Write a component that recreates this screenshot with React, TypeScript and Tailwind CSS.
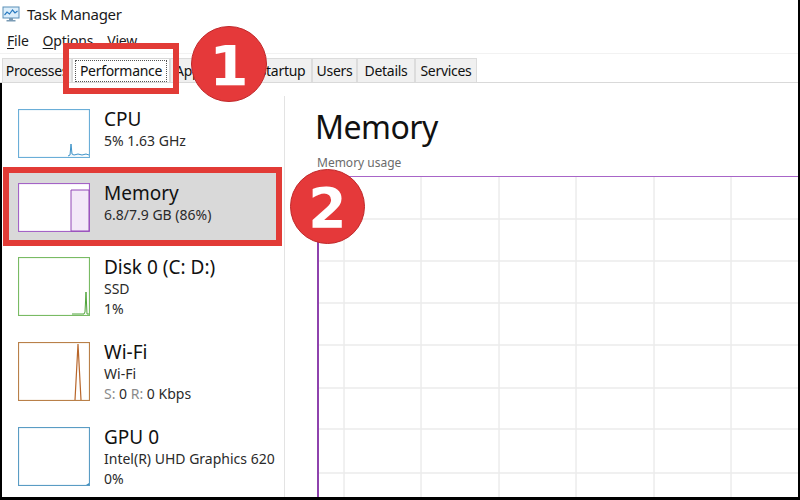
import React from "react";

const tabs: { label: string; w: string; active?: boolean }[] = [
  { label: "Processes", w: "w-[70px]" },
  { label: "Performance", w: "w-[98px]", active: true },
  { label: "App history", w: "w-[82px]" },
  { label: "Startup", w: "w-[60px]" },
  { label: "Users", w: "w-[45px]" },
  { label: "Details", w: "w-[58px]" },
  { label: "Services", w: "w-[62px]" },
];

function TaskIcon() {
  return (
    <svg width="18" height="17" viewBox="0 0 18 17">
      <rect x="1" y="1" width="16" height="11" fill="#dceefb" stroke="#5b8fb8" strokeWidth="1" />
      <path d="M2.5 9 L5 6 L7.5 8 L10.5 4 L13 7 L15.5 5" fill="none" stroke="#2b7bc0" strokeWidth="1.2" />
      <rect x="7" y="12" width="4" height="2" fill="#7a9bb5" />
      <rect x="4.5" y="14" width="9" height="1.5" fill="#7a9bb5" />
    </svg>
  );
}

function Thumb({ kind, h }: { kind: string; h: number }) {
  const w = 72;
  const border: Record<string, string> = {
    cpu: "#6aaed8",
    mem: "#a463c6",
    disk: "#79bb64",
    wifi: "#b98049",
    gpu: "#5a9cc4",
  };
  return (
    <svg width={w} height={h} viewBox={`0 0 ${w} ${h}`} className="shrink-0 block">
      <rect x="0.5" y="0.5" width={w - 1} height={h - 1} fill="#ffffff" stroke={border[kind]} strokeWidth="1.2" />
      {kind === "cpu" && (
        <path
          d={`M50 ${h - 2} L52 ${h - 3} L53 ${h - 14} L54 ${h - 4} L56 ${h - 3} L60 ${h - 4} L64 ${h - 3} L68 ${h - 4} L71 ${h - 3}`}
          fill="#eaf3fa"
          stroke="#3f94c9"
          strokeWidth="1"
        />
      )}
      {kind === "mem" && (
        <path d={`M53 ${h - 1} L53 7 L71 7 L71 ${h - 1} Z`} fill="#f3e8f8" stroke="#9246b6" strokeWidth="1" />
      )}
      {kind === "disk" && (
        <g fill="none" stroke="#4fa43a" strokeWidth="1">
          <path d={`M54 ${h - 2} L66 ${h - 2} L67 ${h - 4} L68 ${h - 24} L69 ${h - 2} L71 ${h - 2}`} />
        </g>
      )}
      {kind === "wifi" && (
        <path d={`M57 ${h - 1} L60 2 L63 ${h - 1}`} fill="none" stroke="#b8662a" strokeWidth="1.2" />
      )}
      {kind === "gpu" && <path d={`M68 ${h - 1} L71 ${h - 3} L71 ${h - 1} Z`} fill="#3f8fc0" />}
    </svg>
  );
}

function Item({
  kind,
  h,
  rowH,
  title,
  lines,
  selected,
}: {
  kind: string;
  h: number;
  rowH: string;
  title: string;
  lines: React.ReactNode[];
  selected?: boolean;
}) {
  return (
    <div className={`${rowH} mx-[5px] flex gap-[14px] pl-[11px] pt-[13px] ${selected ? "bg-[#d9d9d9]" : ""}`}>
      <Thumb kind={kind} h={h} />
      <div className="flex flex-col mt-[-2px]">
        <div className="text-[19px] leading-[24px] text-[#111]">{title}</div>
        {lines.map((l, i) => (
          <div key={i} className="text-[14px] leading-[20px] text-[#2a2a2a]">
            {l}
          </div>
        ))}
      </div>
    </div>
  );
}

export default function App() {
  const vx = [27, 104, 182, 259, 337, 414];
  const hy = [43, 85, 127, 169, 212, 253, 297];
  return (
    <div className="relative w-[800px] h-[500px] overflow-hidden bg-white font-['Noto_Sans',sans-serif] text-[#111] border-r-2 border-b-[3px] border-black">
      {/* title bar */}
      <div className="h-[28px] flex items-center pl-[2px] gap-[7px]">
        <TaskIcon />
        <span className="text-[15px] tracking-[-0.3px] text-[#1a1a1a]">Task Manager</span>
      </div>
      {/* menu */}
      <div className="h-[26px] flex items-center pl-[7px] gap-[14px] text-[14px] tracking-[-0.2px] text-[#1a1a1a] border-b border-[#f2f2f2]">
        <span>
          <span className="underline underline-offset-2">F</span>ile
        </span>
        <span>
          <span className="underline underline-offset-2">O</span>ptions
        </span>
        <span>
          <span className="underline underline-offset-2">V</span>iew
        </span>
      </div>
      {/* tabs */}
      <div className="flex pl-[2px] pt-[4px] border-b border-[#d9d9d9]">
        {tabs.map((t) => (
          <div
            key={t.label}
            className={`${t.w} h-[24px] flex items-center justify-center text-[14px] tracking-[-0.3px] whitespace-nowrap overflow-hidden border border-b-0 ${
              t.active ? "bg-white border-[#d9d9d9]" : "bg-[#f0f0f0] border-[#dcdcdc]"
            }`}
          >
            <span className={t.active ? "border border-dotted border-[#555] px-[4px] leading-[20px]" : ""}>
              {t.label}
            </span>
          </div>
        ))}
      </div>
      {/* main */}
      <div className="flex pt-[13px] h-[416px] border-l-2 border-black">
        <div className="w-[283px] shrink-0 border-r border-[#e3e3e3] flex flex-col">
          <Item kind="cpu" h={49} rowH="h-[74px]" title="CPU" lines={["5%  1.63 GHz"]} />
          <Item kind="mem" h={49} rowH="h-[74px]" title="Memory" lines={["6.8/7.9 GB (86%)"]} selected />
          <Item kind="disk" h={59} rowH="h-[85px]" title="Disk 0 (C: D:)" lines={["SSD", "1%"]} />
          <Item
            kind="wifi"
            h={59}
            rowH="h-[85px]"
            title="Wi-Fi"
            lines={[
              "Wi-Fi",
              <span key="s">
                <span className="text-[#8a8a8a]">S:</span> 0 <span className="text-[#8a8a8a]">R:</span> 0 Kbps
              </span>,
            ]}
          />
          <Item kind="gpu" h={59} rowH="h-[85px]" title="GPU 0" lines={["Intel(R) UHD Graphics 620", "0%"]} />
        </div>
        <div className="flex-1 flex flex-col pl-[30px] pt-[11px]">
          <div className="text-[32px] leading-[40px] tracking-[-0.5px] text-[#111]">Memory</div>
          <div className="mt-[8px] pl-[2px] text-[12px] leading-[16px] text-[#6b6b6b]">Memory usage</div>
          <div className="mt-[5px] ml-[2px] flex-1 border-t border-l-2 border-t-[#a865c8] border-l-[#8e42ad]">
            <svg width="500" height="340" className="block">
              {vx.map((x) => (
                <line key={x} x1={x - 2} y1={0} x2={x - 2} y2={340} stroke="#e2e2e2" strokeWidth="1" />
              ))}
              {hy.map((y) => (
                <line key={y} x1={0} y1={y - 1} x2={500} y2={y - 1} stroke="#ebebeb" strokeWidth="1.3" />
              ))}
            </svg>
          </div>
        </div>
      </div>

      {/* annotations */}
      <div className="absolute left-[63px] top-[43px] w-[116px] h-[51px] border-[6px] border-[#e23b36]" />
      <div className="absolute left-[191px] top-[26px] w-[76px] h-[76px] rounded-full bg-[#e5393a] border border-[#c0282a] flex items-center justify-center">
        <span className="text-white text-[56px] font-bold leading-none font-['DejaVu_Sans',sans-serif] mt-[4px]">1</span>
      </div>
      <div className="absolute left-[3px] top-[167px] w-[279px] h-[79px] border-[6px] border-[#e23b36]" />
      <div className="absolute left-[290px] top-[169px] w-[75px] h-[75px] rounded-full bg-[#e5393a] border border-[#c0282a] flex items-center justify-center">
        <span className="text-white text-[55px] font-bold leading-none font-['DejaVu_Sans',sans-serif] mt-[4px]">2</span>
      </div>
    </div>
  );
}
